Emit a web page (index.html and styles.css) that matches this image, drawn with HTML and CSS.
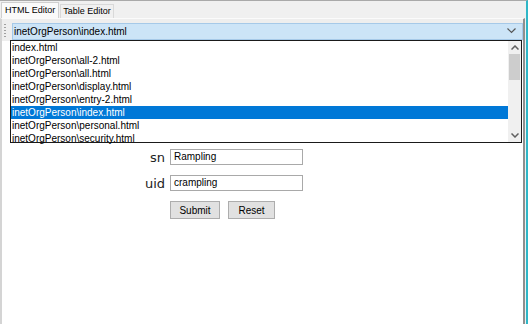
FILE: index.html
```html
<!DOCTYPE html>
<html>
<head>
<meta charset="utf-8">
<link rel="stylesheet" href="styles.css">
</head>
<body>
<div class="window">
  <div class="tabs">
    <div class="tab active">HTML Editor</div>
    <div class="tab">Table Editor</div>
  </div>
  <div class="pane">
    <div class="toolbar">
      <div class="grip"></div>
      <div class="combo">
        <span class="combo-text">inetOrgPerson\index.html</span>
        <svg class="chev" width="9" height="6" viewBox="0 0 9 6"><path d="M0.5 0.5 L4.5 4.5 L8.5 0.5" fill="none" stroke="#555" stroke-width="1.2"/></svg>
      </div>
    </div>
    <div class="content">
      <form class="form">
        <label class="lbl">sn</label>
        <div class="field">Rampling</div>
        <label class="lbl">uid</label>
        <div class="field">crampling</div>
        <div></div>
        <div class="buttons">
          <button type="button" class="btn">Submit</button>
          <button type="button" class="btn">Reset</button>
        </div>
      </form>
      <div class="dropdown">
        <ul class="items">
          <li>index.html</li>
          <li>inetOrgPerson\all-2.html</li>
          <li>inetOrgPerson\all.html</li>
          <li>inetOrgPerson\display.html</li>
          <li>inetOrgPerson\entry-2.html</li>
          <li class="sel">inetOrgPerson\index.html</li>
          <li>inetOrgPerson\personal.html</li>
          <li>inetOrgPerson\security.html</li>
        </ul>
        <div class="scroll">
          <svg class="arrow" width="8" height="5" viewBox="0 0 8 5"><path d="M0.5 4.5 L4 1 L7.5 4.5" fill="none" stroke="#606060" stroke-width="1.5"/></svg>
          <div class="track"><div class="thumb"></div></div>
          <svg class="arrow" width="8" height="5" viewBox="0 0 8 5"><path d="M0.5 0.5 L4 4 L7.5 0.5" fill="none" stroke="#606060" stroke-width="1.5"/></svg>
        </div>
      </div>
    </div>
  </div>
</div>
</body>
</html>
```
FILE: styles.css
```css
* { box-sizing: border-box; }
html, body { margin: 0; padding: 0; }
body {
  width: 528px;
  height: 324px;
  overflow: hidden;
  background: #f0f0f0;
  font-family: "Liberation Sans", Arial, sans-serif;
  font-size: 10px;
  color: #000;
}
.window {
  width: 528px;
  height: 324px;
  display: flex;
  flex-direction: column;
  border-top: 1px solid #a9a9a9;
  border-right: 2px solid #2fb7c7;
}
.tabs {
  display: flex;
  align-items: flex-end;
  height: 17px;
  padding-left: 1px;
}
.tab {
  height: 14px;
  padding: 0 2px;
  line-height: 13px;
  font-size: 9px;
  border: 1px solid #d9d9d9;
  border-bottom: none;
  background: #f0f0f0;
}
.tab.active {
  height: 16px;
  line-height: 15px;
  padding: 0 3px;
  background: #fafafa;
  border-color: #d0d0d0;
  margin-right: 1px;
}
.pane {
  flex: 1;
  display: flex;
  flex-direction: column;
  border-left: 2px solid #d4d4d4;
  border-right: 2px solid #8f8f8f;
  border-top: 1px solid #fbfbfb;
  margin-right: 1px;
}
.toolbar {
  height: 22px;
  display: flex;
  align-items: center;
  background: #eeeeee;
  padding: 3px 0 1px 2px;
}
.grip {
  width: 2px;
  height: 16px;
  margin-right: 6px;
  background-image: radial-gradient(circle, #a0a0a0 0.8px, transparent 0.9px);
  background-size: 2px 3px;
}
.combo {
  flex: 1;
  height: 17px;
  display: flex;
  align-items: center;
  justify-content: space-between;
  background: #cce4f7;
  border: 1px solid #a6c9e8;
  padding: 0 6px 0 1px;
}
.combo-text { line-height: 15px; }
.chev { display: block; }
.content {
  position: relative;
  flex: 1;
  background: #fff;
  border-top: 1px solid #fff;
}
.form {
  display: grid;
  grid-template-columns: 163px 133px;
  column-gap: 5px;
  row-gap: 10px;
  padding-top: 107px;
  align-items: center;
}
.lbl {
  text-align: right;
  font-family: "DejaVu Sans", Verdana, sans-serif;
  font-size: 13px;
  color: #222;
}
.field {
  height: 16px;
  border: 1px solid #a9a9a9;
  padding-left: 3px;
  line-height: 14px;
  font-size: 10px;
}
.buttons {
  display: flex;
  gap: 8px;
}
.btn {
  font-family: "Liberation Sans", Arial, sans-serif;
  font-size: 10px;
  height: 18px;
  width: 50px;
  padding: 0;
  background: #e1e1e1;
  border: 1px solid #adadad;
  color: #000;
}
.btn + .btn { width: 47px; }
.dropdown {
  position: absolute;
  left: 8px;
  top: -2px;
  width: 512px;
  height: 103px;
  background: #fff;
  border: 1px solid #1a1a1a;
  display: flex;
}
.items {
  list-style: none;
  margin: 0;
  padding: 0;
  flex: 1;
}
.items li {
  height: 13px;
  line-height: 13px;
  padding-left: 1px;
  white-space: nowrap;
}
.items li.sel {
  background: #0078d7;
  color: #fff;
}
.scroll {
  width: 13px;
  background: #f0f0f0;
  display: flex;
  flex-direction: column;
  align-items: center;
}
.arrow { margin: 4px 0; display: block; }
.track { flex: 1; width: 100%; padding: 0 1px; }
.thumb { height: 26px; background: #cdcdcd; }
```
